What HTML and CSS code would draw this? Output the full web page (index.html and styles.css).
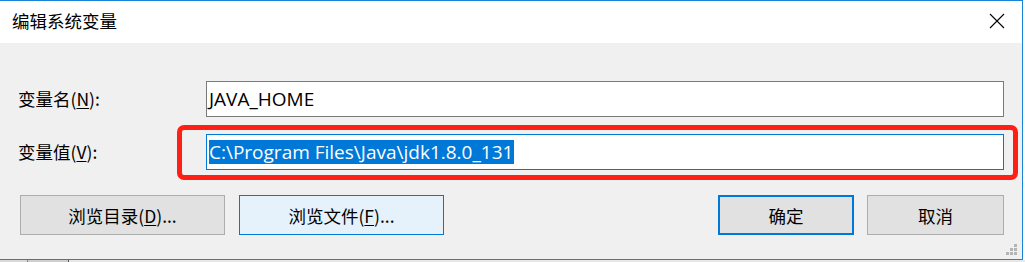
FILE: index.html
```html
<!DOCTYPE html>
<html lang="zh-CN">
<head>
<meta charset="utf-8">
<title>编辑系统变量</title>
<link rel="stylesheet" href="styles.css">
</head>
<body>
<div class="window">
  <div class="titlebar">
    <span class="title">编辑系统变量</span>
    <span class="close" aria-label="关闭">
      <svg width="16" height="16" viewBox="0 0 16 16"><path d="M1 1 L15 15 M15 1 L1 15" stroke="#000" stroke-width="1.1" fill="none"/></svg>
    </span>
  </div>
  <div class="content">
    <div class="form">
      <label class="label">变量名(<u>N</u>):</label>
      <div class="input">JAVA_HOME</div>
      <label class="label">变量值(<u>V</u>):</label>
      <div class="input focused"><span class="sel">C:\Program Files\Java\jdk1.8.0_131</span></div>
    </div>
    <div class="buttons">
      <button class="btn wide">浏览目录(<u>D</u>)...</button>
      <button class="btn wide hover">浏览文件(<u>F</u>)...</button>
      <span class="spacer"></span>
      <button class="btn ok">确定</button>
      <button class="btn cancel">取消</button>
    </div>
    <div class="grip">
      <svg width="12" height="12" viewBox="0 0 12 12" fill="#b4b4b4">
        <rect x="8" y="0" width="3" height="3"/>
        <rect x="4" y="4" width="3" height="3"/><rect x="8" y="4" width="3" height="3"/>
        <rect x="0" y="8" width="3" height="3"/><rect x="4" y="8" width="3" height="3"/><rect x="8" y="8" width="3" height="3"/>
      </svg>
    </div>
  </div>
  <div class="highlight-box"></div>
</div>
<div class="below">
  <span class="seg s1"></span><span class="seg s2"></span><span class="seg s3"></span>
</div>
</body>
</html>
```
FILE: styles.css
```css
html, body {
  margin: 0;
  padding: 0;
}
body {
  width: 1025px;
  height: 262px;
  overflow: hidden;
  background: #ffffff;
  font-family: "Noto Sans CJK SC", "Noto Sans", sans-serif;
  color: #000;
}
.window {
  position: relative;
  width: 1022px;
  height: 258px;
  border-top: 1px solid #1883d7;
  border-right: 1px solid #1883d7;
  border-bottom: 1px solid #1883d7;
  background: #f0f0f0;
  display: flex;
  flex-direction: column;
}
.titlebar {
  height: 42px;
  background: #ffffff;
  display: flex;
  align-items: center;
  padding-left: 12px;
}
.title {
  font-size: 17.5px;
  line-height: 1;
  margin-top: -2px;
}
.close {
  margin-left: auto;
  width: 16px;
  height: 16px;
  margin-right: 17px;
  margin-top: -3px;
  display: flex;
}
.content {
  position: relative;
  flex: 1;
  padding: 38px 18px 0 18px;
}
.form {
  display: grid;
  grid-template-columns: 188px 1fr;
  row-gap: 17px;
  align-items: center;
}
.label {
  font-size: 17.5px;
  line-height: 1;
}
.label u {
  text-underline-offset: 2px;
}
.input {
  height: 34px;
  border: 1px solid #7a7a7a;
  background: #fff;
  display: flex;
  align-items: center;
  padding-left: 2px;
  font-size: 19px;
  font-family: "Open Sans", "Noto Sans CJK SC", sans-serif;
}
.input.focused {
  border-color: #0078d7;
}
.sel {
  background: #0078d7;
  color: #fff;
  line-height: 24px;
  padding-right: 1px;
}
.buttons {
  display: flex;
  align-items: center;
  gap: 14px;
  margin-top: 25px;
  padding-left: 2px;
}
.spacer {
  flex: 1;
}
.btn {
  height: 40px;
  border: 1px solid #adadad;
  background: #e1e1e1;
  font-family: "Noto Sans CJK SC", "Noto Sans", sans-serif;
  font-size: 17.5px;
  color: #000;
  padding: 0;
  margin: 0;
}
.btn u {
  text-underline-offset: 2px;
}
.wide {
  width: 205px;
}
.hover {
  background: #e5f1fb;
  border-color: #0078d7;
}
.ok {
  width: 136px;
  border: 2px solid #0078d7;
  margin-right: -1px;
}
.cancel {
  width: 137px;
}
.grip {
  position: absolute;
  right: 4px;
  bottom: 3px;
  display: flex;
}
.highlight-box {
  position: absolute;
  left: 177px;
  top: 124px;
  width: 831px;
  height: 45px;
  border: 5px solid #ff2015;
  border-radius: 7px;
}
.below {
  height: 3px;
  background: #e8e8e8;
  display: flex;
}
.seg {
  height: 3px;
}
.s1 { width: 27px; background: #d9d9d9; border-right: 1px solid #888; }
.s2 { width: 20px; background: #cfcfcf; }
.s3 { width: 20px; background: #cfcfcf; border-right: 1px solid #555; }
```
